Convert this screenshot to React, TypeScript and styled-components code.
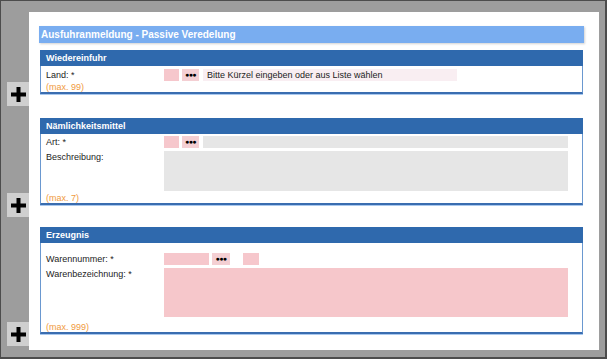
import React from "react";
import styled, { createGlobalStyle } from "styled-components";

const GlobalStyle = createGlobalStyle`
  html, body {
    margin: 0;
    padding: 0;
    background: #9d9d9d;
  }
  body {
    font-family: "Liberation Sans", Arial, sans-serif;
  }
`;

const Screen = styled.div`
  box-sizing: border-box;
  width: 607px;
  height: 359px;
  border: 1px solid #4c4c4c;
  border-right-width: 2px;
  border-bottom-width: 2px;
  background: #9d9d9d;
  padding: 11px 6px 0 28px;
`;

const Sheet = styled.div`
  box-sizing: border-box;
  height: 338px;
  background: #ffffff;
  padding: 14px 15px 0 10px;
`;

const TitleBar = styled.div`
  height: 17px;
  line-height: 17px;
  padding-left: 2px;
  background: #79adf0;
  color: #ffffff;
  font-size: 10px;
  font-weight: bold;
  box-shadow: 1px 1px 2px rgba(0, 0, 0, 0.18);
`;

const Section = styled.div<{ $top: number }>`
  position: relative;
  margin: ${p => p.$top}px 1px 0 1px;
`;

const SectionHead = styled.div`
  height: 16px;
  line-height: 16px;
  padding-left: 6px;
  background: #2f69ad;
  color: #ffffff;
  font-size: 9px;
  font-weight: bold;
`;

const SectionBody = styled.div<{ $padTop: number }>`
  display: flex;
  flex-direction: column;
  gap: 3px;
  padding: ${p => p.$padTop}px 14px 0 5px;
  border-left: 1px solid #6a98d0;
  border-right: 1px solid #6a98d0;
  border-bottom: 2px solid #3a6db0;
  box-shadow: 0 1px 0 #a9c8ee;
`;

const Row = styled.div`
  display: flex;
  align-items: flex-start;
  min-height: 12px;
`;

const Label = styled.div`
  width: 118px;
  flex: none;
  font-size: 9px;
  line-height: 12px;
  color: #1c1c1c;
`;

const CodeBox = styled.div<{ $w: number; $gap?: number }>`
  flex: none;
  width: ${p => p.$w}px;
  height: 12px;
  margin-left: ${p => p.$gap || 0}px;
  background: #f6c7cc;
`;

const DotsButton = styled.div<{ $w: number }>`
  flex: none;
  width: ${p => p.$w}px;
  height: 12px;
  margin-left: 3px;
  background: #f4cfd3;
  color: #000;
  font-size: 7px;
  line-height: 12px;
  text-align: center;
  letter-spacing: -0.5px;
`;

const Hint = styled.div`
  flex: none;
  width: 250px;
  height: 12px;
  margin-left: 4px;
  padding-left: 4px;
  background: #f9eef2;
  font-size: 9px;
  line-height: 12px;
  color: #1c1c1c;
`;

const PlainField = styled.div`
  flex: 1;
  height: 12px;
  margin-left: 4px;
  background: #e6e6e6;
`;

const TextArea = styled.div<{ $h: number; $tone: "grey" | "pink" }>`
  flex: 1;
  height: ${p => p.$h}px;
  background: ${p => (p.$tone === "pink" ? "#f6c7cb" : "#e6e6e6")};
`;

const Max = styled.div<{ $top: number }>`
  margin-top: ${p => p.$top}px;
  font-size: 9px;
  line-height: 10px;
  color: #f09a3e;
`;

const AddButton = styled.div`
  position: absolute;
  left: -33px;
  bottom: -12px;
  width: 22px;
  height: 24px;
  background: #cfcfcf;
  display: flex;
  align-items: center;
  justify-content: center;
`;

const PlusIcon = () => (
  <svg width="15" height="15" viewBox="0 0 15 15">
    <rect x="5.5" y="0" width="4" height="15" fill="#000" />
    <rect x="0" y="5.5" width="15" height="4" fill="#000" />
  </svg>
);

const Dots = ({ w }: { w: number }) => <DotsButton $w={w}>●●●</DotsButton>;

export default function App() {
  return (
    <Screen>
      <GlobalStyle />
      <Sheet>
        <TitleBar>Ausfuhranmeldung - Passive Veredelung</TitleBar>

        <Section $top={7}>
          <SectionHead>Wiedereinfuhr</SectionHead>
          <SectionBody $padTop={3}>
            <Row>
              <Label>Land: *</Label>
              <CodeBox $w={15} />
              <Dots w={17} />
              <Hint>Bitte Kürzel eingeben oder aus Liste wählen</Hint>
            </Row>
            <Max $top={-2}>(max. 99)</Max>
          </SectionBody>
          <AddButton>
            <PlusIcon />
          </AddButton>
        </Section>

        <Section $top={24}>
          <SectionHead>Nämlichkeitsmittel</SectionHead>
          <SectionBody $padTop={2}>
            <Row>
              <Label>Art: *</Label>
              <CodeBox $w={15} />
              <Dots w={17} />
              <PlainField />
            </Row>
            <Row>
              <Label>Beschreibung:</Label>
              <TextArea $h={40} $tone="grey" />
            </Row>
            <Max $top={-1}>(max. 7)</Max>
          </SectionBody>
          <AddButton>
            <PlusIcon />
          </AddButton>
        </Section>

        <Section $top={22}>
          <SectionHead>Erzeugnis</SectionHead>
          <SectionBody $padTop={10}>
            <Row>
              <Label>Warennummer: *</Label>
              <CodeBox $w={45} />
              <Dots w={18} />
              <CodeBox $w={16} $gap={13} />
            </Row>
            <Row>
              <Label>Warenbezeichnung: *</Label>
              <TextArea $h={49} $tone="pink" />
            </Row>
            <Max $top={2}>(max. 999)</Max>
          </SectionBody>
          <AddButton>
            <PlusIcon />
          </AddButton>
        </Section>
      </Sheet>
    </Screen>
  );
}
